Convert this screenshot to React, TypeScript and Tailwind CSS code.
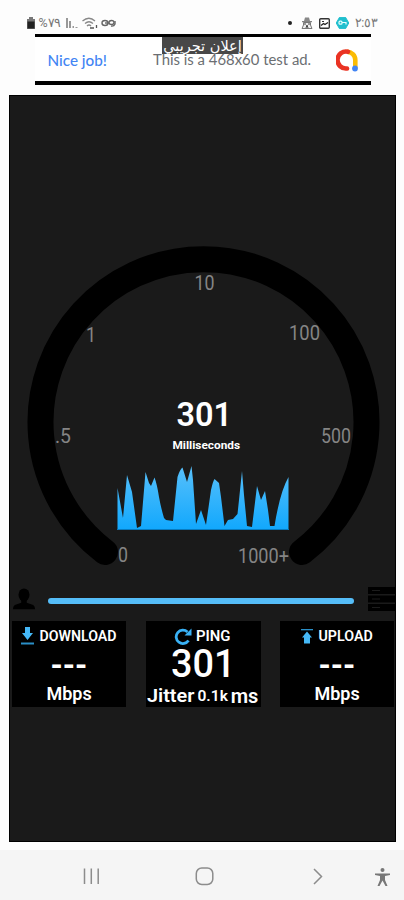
import React from "react";

const sans = "font-['Roboto','Noto_Sans',sans-serif]";

const ticks = [
  { t: "10", x: 194.5, y: 289.5, w: 20 },
  { t: "1", x: 86, y: 341.5, w: 10 },
  { t: "100", x: 289, y: 340, w: 31 },
  { t: ".5", x: 55, y: 442.5, w: 16 },
  { t: "500", x: 321, y: 442.5, w: 30 },
  { t: "0", x: 118, y: 561.5, w: 10 },
  { t: "1000+", x: 238, y: 563, w: 51 },
];

function Gauge() {
  return (
    <svg className={`block h-[350px] w-[385px] shrink-0 ${sans}`} viewBox="10 230 385 350">
      <defs>
        <linearGradient id="wave" x1="0" y1="0" x2="0" y2="1">
          <stop offset="0" stopColor="#58c0fb" />
          <stop offset="1" stopColor="#12a8fd" />
        </linearGradient>
      </defs>
      <path d="M105 552A163 163 0 1 1 302 552" fill="none" stroke="#000" strokeWidth="26" strokeLinecap="round" />
      {ticks.map((k) => (
        <text key={k.t} x={k.x} y={k.y} textLength={k.w} lengthAdjust="spacingAndGlyphs" fontSize="19.5" fill="#858585">
          {k.t}
        </text>
      ))}
      <text x="176.500" y="425.5" textLength="55.500" fontSize="34" fontWeight="600" fill="#fff" lengthAdjust="spacingAndGlyphs">301</text>
      <text x="172.500" y="448.500" textLength="67.500" fontSize="11.500" fontWeight="700" fill="#fff" lengthAdjust="spacingAndGlyphs">Milliseconds</text>
      <path
        d="M117.500 529V488L123 518L127 475L132 492L137 528L141 526L145.500 472L149 483L151 486L154.500 477.500Q157 484 159 497Q161 508 164 518L166 520L173 521L177.500 477Q180 469 182.500 467.500L187 482L191.500 466L193 480L196 524L201 510L206 525L211 490Q213 481 214.500 479L219 483L221 497L224.500 526L228 520L233 519L237.500 514L239 500L242 471L244 495L247 526L252 527L257 486L261 500L265 491L268 510L270 526L274.500 526Q280 492 288.500 477V529Z"
        fill="url(#wave)"
      />
      <path d="M117 529.500H289" stroke="#087bc0" />
    </svg>
  );
}

function UserIcon() {
  return (
    <svg className="h-[24px] w-[24px]" viewBox="0 0 26 24" fill="#000">
      <ellipse cx="13" cy="7.500" rx="6" ry="7" />
      <path d="M10 12H16V16L23 18.500Q25 20 25 23H1Q1 20 3 18.500L10 16Z" />
    </svg>
  );
}

function ServerIcon() {
  return (
    <svg className="h-[24px] w-[27px]" viewBox="0 0 27 24">
      <path d="M0 0H27V7H0ZM0 8.500H27V15.500H0ZM0 17H27V24H0Z" fill="#000" />
      <path d="M4 3.500H12M4 12H12M4 20.500H12" stroke="#1c1c1c" />
    </svg>
  );
}

function DownIcon() {
  return (
    <svg className="h-[18px] w-[13px]" viewBox="0 0 13 18">
      <path d="M4 0H9V6H12L6.500 13L1 6H4Z" fill="#45b8f7" />
      <path d="M0 15.500H13V17.500H0Z" fill="#2a8fc7" />
    </svg>
  );
}

function UpIcon() {
  return (
    <svg className="h-[15px] w-[12px]" viewBox="0 0 12 15">
      <path d="M0 0H12V1.300H0Z" fill="#2a8fc7" />
      <path d="M6 2.500L11 8.500H9V14.500H3V8.500H1Z" fill="#45b8f7" />
    </svg>
  );
}

function ReloadIcon() {
  return (
    <svg className="h-[17px] w-[18px]" viewBox="0 0 18 17">
      <path d="M14.500 12.500A6.700 6.700 0 1 1 13.500 4" fill="none" stroke="#39b1f5" strokeWidth="2.800" />
      <path d="M17.500 .5V7.500H10.500Z" fill="#39b1f5" />
    </svg>
  );
}

/** Single line of text stretched to an exact advance width. */
function Line({ text, w, size, h, weight = 600 }: { text: string; w: number; size: number; h: number; weight?: number }) {
  const ref = React.useRef<HTMLSpanElement>(null);
  const [k, setK] = React.useState(1);
  React.useLayoutEffect(() => {
    if (ref.current) setK(w / ref.current.offsetWidth);
  }, [w]);
  return (
    <span className="flex items-center justify-center whitespace-nowrap" style={{ width: w, height: h }}>
      <span ref={ref} style={{ fontSize: size, lineHeight: `${h}px`, fontWeight: weight, transform: `scaleX(${k})` }}>
        {text}
      </span>
    </span>
  );
}

function StatusBar() {
  return (
    <header className="flex h-[34px] shrink-0 items-center justify-between pt-[12px] pr-[26px] pl-[26px] text-[#777]">
      <div className="flex h-[14px] items-center">
        <svg className="h-[12px] w-[10px]" viewBox="0 0 10 12">
          <path d="M3 0H7V2H9V12H1V2H3Z" fill="#777" />
          <path d="M1.500 4.500H8.500V11.500H1.500Z" fill="#222" />
        </svg>
        <span className="ml-[2px] flex" dir="ltr"><Line text="%٧٩" w={23} size={13} h={14} weight={400} /></span>
        <svg className="ml-[5px] h-[12px] w-[12px]" viewBox="0 0 12 12" fill="#999">
          <path d="M0 1H2V11H0ZM3 4H5V11H3ZM6.500 9H8V11H6.500ZM9.500 10H11.500V11H9.500Z" />
        </svg>
        <svg className="ml-[4px] h-[12px] w-[16px]" viewBox="0 0 16 12" fill="none" stroke="#888" strokeWidth="1.300">
          <path d="M.5 4Q7 -1.500 13 4M3 6.500Q7 3 11 6.500M5 9Q7 7 9 9" />
          <path d="M8 11H12M14.500 8V11" stroke="#555" />
        </svg>
        <svg className="ml-[3px] h-[10px] w-[15px]" viewBox="0 0 15 10" fill="none" stroke="#666" strokeWidth="1.400">
          <ellipse cx="4" cy="5" rx="3" ry="2.500" />
          <path d="M4 5H8" />
          <ellipse cx="10.500" cy="4.500" rx="2.500" ry="2" />
          <path d="M14 3V6Q13 8.500 10 8" />
        </svg>
      </div>
      <div className="flex h-[14px] items-center">
        <span className="size-[4px] rounded-full bg-[#222]" />
        <svg className="ml-[9px] h-[12px] w-[12px]" viewBox="0 0 12 12">
          <path d="M3 4L4 .5H8L9 4Z" fill="#888" />
          <path d="M1 4.700H11" stroke="#666" />
          <path d="M2.500 5.500H9.500V8L11 11.500H1L2.500 8Z" fill="#eee" stroke="#777" />
          <path d="M3 7H5M7 7H9M5 11L6 8L7 11" stroke="#444" fill="none" />
        </svg>
        <svg className="ml-[6px] h-[11px] w-[11px]" viewBox="0 0 11 11">
          <rect x=".7" y=".7" width="9.600" height="9.600" rx="1" fill="#fff" stroke="#333" strokeWidth="1.400" />
          <path d="M2 7.500L4.500 5.500L6 6.500L9 4.500" fill="none" stroke="#222" strokeWidth="1.300" />
          <path d="M3 3.500H5" stroke="#333" />
        </svg>
        <svg className="ml-[6px] h-[12px] w-[13px]" viewBox="0 0 13 12">
          <path d="M3.500 .3H9.500L12.800 6L9.500 11.700H3.500L.2 6Z" fill="#20bfce" stroke="#20bfce" />
          <rect x="3" y="4.200" width="3" height="3" rx="1" fill="none" stroke="#e5ffff" strokeWidth="1.200" />
          <path d="M6 5.500H10V7.500" fill="none" stroke="#e5ffff" strokeWidth="1.200" />
        </svg>
        <span className="ml-[6px] flex" dir="ltr"><Line text="٢:٥٣" w={23} size={13} h={14} weight={400} /></span>
      </div>
    </header>
  );
}

function AdBanner() {
  return (
    <section className="relative ml-[35px] flex h-[51px] w-[336px] items-center border-t-[3px] border-b-[4px] border-black bg-white pt-[2px] pr-[13px] pl-[12px] font-['Lato','Open_Sans',sans-serif]">
      <span className="text-[#4285f4]"><Line text="Nice job!" w={60} size={15} h={20} weight={500} /></span>
      <span className="ml-[46px] text-[#6b6e72]"><Line text="This is a 468x60 test ad." w={158} size={14.5} h={20} weight={400} /></span>
      <svg className="ml-auto h-[23px] w-[22px]" viewBox="0 0 22 23" fill="none" strokeWidth="4.600">
        <path d="M11 2.800A8.200 8.200 0 0 1 19.300 11V19" stroke="#fbbc04" />
        <path d="M12 2.800A8.500 8.500 0 1 0 11 19.500" stroke="#ea3323" strokeLinecap="round" />
        <circle cx="19" cy="19.500" r="2.900" fill="#4285f4" />
      </svg>
      <span className="absolute top-0 left-[127px] flex h-[17px] w-[81px] items-center justify-center bg-[#484848] text-white font-['DejaVu_Sans',sans-serif]" dir="rtl">
        <Line text="إعلان تجريبي" w={78} size={14.5} h={16} weight={400} />
      </span>
    </section>
  );
}

function Transfer({ label, icon, w }: { label: string; icon: React.ReactNode; w: number }) {
  return (
    <div className="flex h-[86px] w-[114px] flex-col items-center bg-black pt-[5px]">
      <div className="flex h-[20px] items-center gap-[6px]">
        {icon}
        <Line text={label} w={w} size={14} h={18} />
      </div>
      <div className="flex h-[38px] items-center">
        <Line text="---" w={37} size={32} h={38} weight={700} />
      </div>
      <Line text="Mbps" w={45} size={18} h={20} />
    </div>
  );
}

function Results() {
  return (
    <section className="flex h-[86px] justify-between pr-px pl-[2px] text-white">
      <Transfer label="DOWNLOAD" icon={<DownIcon />} w={77} />
      <div className="flex h-[86px] w-[115px] flex-col items-center bg-black pt-[5px]">
        <div className="flex h-[20px] items-center gap-[4px] pr-[2px]">
          <ReloadIcon />
          <Line text="PING" w={34} size={14} h={18} />
        </div>
        <div className="flex h-[36px] items-center">
          <Line text="301" w={65} size={39} h={36} weight={500} />
        </div>
        <div className="flex h-[24px] items-center gap-[3px] pt-[3px]">
          <Line text="Jitter" w={47} size={19} h={22} />
          <Line text="0.1k" w={30} size={14} h={22} />
          <Line text="ms" w={28} size={20} h={22} />
        </div>
      </div>
      <Transfer label="UPLOAD" icon={<UpIcon />} w={54} />
    </section>
  );
}

function NavBar() {
  return (
    <footer className="mt-auto h-[50px] w-full bg-[#f5f5f5]">
      <svg className="block h-[50px] w-[404px]" viewBox="0 850 404 50" fill="none" stroke="#8c8c8c" strokeWidth="1.500">
        <path d="M84.500 868.500V884M91.300 868.500V884M98.200 868.500V884" />
        <rect x="196.300" y="868" width="16.500" height="16.500" rx="5.500" />
        <path d="M314 869L321.500 876.500L314 884" />
        <circle cx="382.500" cy="870" r="2" fill="#777" stroke="none" />
        <path d="M375 873.500H390V875L385 876V880L387.500 886H385.500L382.500 880.500L379.500 886H377.500L380 880V876L375 875Z" fill="#777" stroke="none" />
      </svg>
    </footer>
  );
}

export default function App() {
  return (
    <div className={`flex h-[900px] w-[404px] flex-col overflow-hidden bg-[#fdfdfd] ${sans}`}>
      <StatusBar />
      <AdBanner />
      <main className="mt-[10px] ml-[9px] flex h-[747px] w-[387px] flex-col border border-black bg-[#1a1a1a] pt-[134px]">
        <Gauge />
        <div className="flex h-[41px] items-start pt-[7px] pl-[2px]">
          <UserIcon />
          <div className="mt-[11px] ml-[12px] h-[6px] w-[306px] rounded-full bg-[#55bdf8]" />
          <div className="ml-auto">
            <ServerIcon />
          </div>
        </div>
        <Results />
      </main>
      <NavBar />
    </div>
  );
}
